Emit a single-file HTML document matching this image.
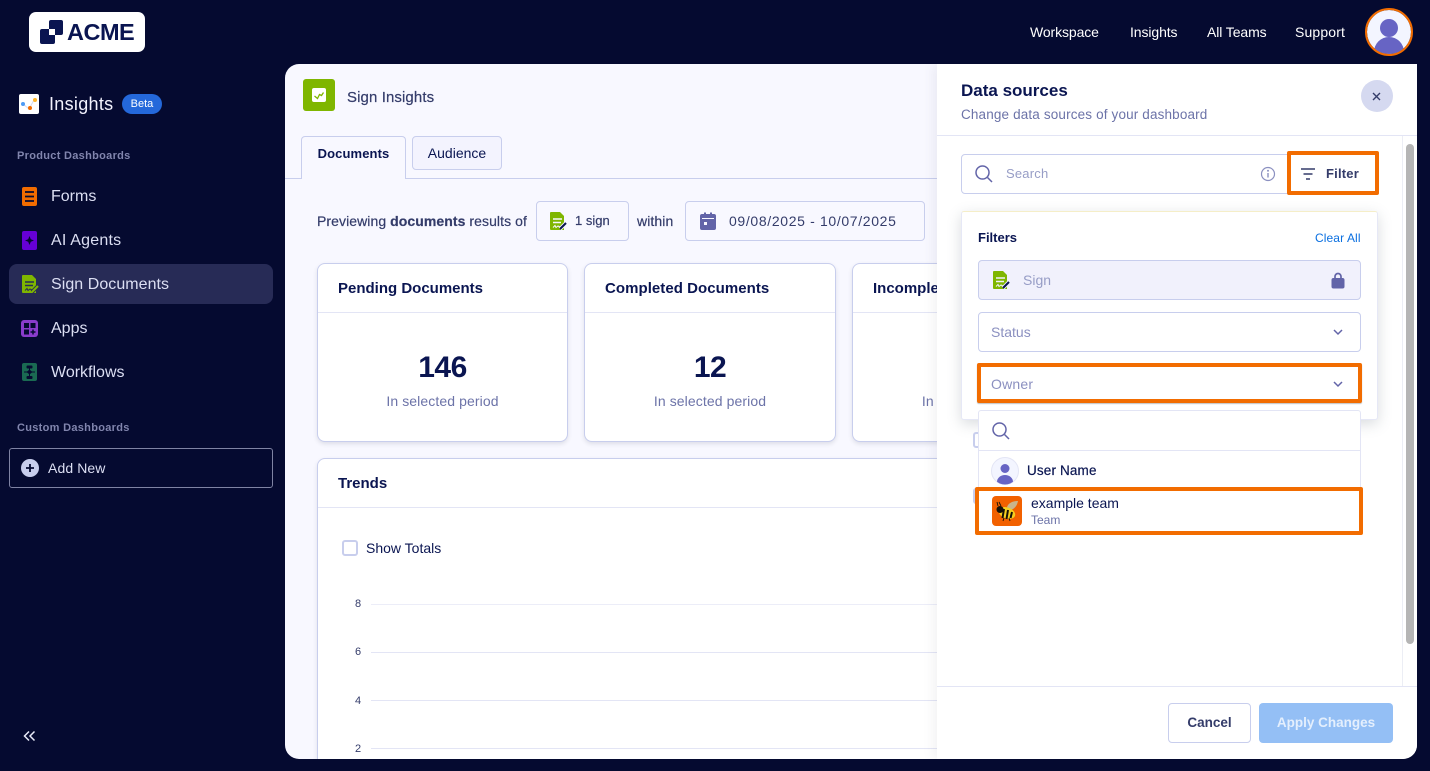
<!DOCTYPE html>
<html lang="en"><head><meta charset="utf-8"><title>Sign Insights</title>
<style>
*{box-sizing:border-box}
html,body{margin:0;padding:0;width:1430px;height:771px;overflow:hidden;background:#050a30;font-family:"Liberation Sans",sans-serif;color:#0a1551}
.a{position:absolute}
.t{position:absolute;white-space:nowrap;line-height:20px}
.box{position:absolute;border:1px solid #c8ceed;border-radius:4px}
.card{position:absolute;background:#fff;border:1px solid #c8ceed;border-radius:8px;box-shadow:0 2px 4px rgba(84,95,111,.16);overflow:hidden}
svg{position:absolute;display:block}
.sub{font-size:14px;letter-spacing:.1px;color:#6c73a8}
.med{-webkit-text-stroke:.2px currentColor}
</style></head><body>

<!-- top bar -->
<div class="a" style="left:29px;top:12px;width:116px;height:40px;background:#fff;border-radius:7px"></div>
<svg style="left:40px;top:20px" width="24" height="24" viewBox="0 0 24 24"><rect x="9" y="0" width="14" height="15" rx="2" fill="#0a1551"/><rect x="0" y="9" width="15" height="15" rx="2" fill="#0a1551"/><rect x="9" y="9" width="6" height="6" fill="#fff"/></svg>
<div class="t" style="left:67px;top:20px;font-size:23.500px;line-height:24px;font-weight:700;color:#0a1551;letter-spacing:-.5px">ACME</div>
<div class="t" style="left:1030px;top:22px;font-size:14px;color:#fff;letter-spacing:-.1px">Workspace</div>
<div class="t" style="left:1130px;top:22px;font-size:14px;color:#fff;letter-spacing:-.1px">Insights</div>
<div class="t" style="left:1207px;top:22px;font-size:14px;color:#fff;letter-spacing:-.1px">All Teams</div>
<div class="t" style="left:1295px;top:22px;font-size:14px;color:#fff;letter-spacing:.15px">Support</div>
<svg style="left:1365px;top:8px" width="48" height="48" viewBox="0 0 48 48"><defs><clipPath id="c1"><circle cx="24" cy="24" r="22"/></clipPath></defs><circle cx="24" cy="24" r="22" fill="#f3f5ff"/><g clip-path="url(#c1)"><circle cx="24" cy="20" r="9" fill="#6764c4"/><ellipse cx="24" cy="44" rx="15" ry="15" fill="#6764c4"/></g><circle cx="24" cy="24" r="23" fill="none" stroke="#f26c00" stroke-width="2"/></svg>

<!-- sidebar -->
<div class="a" style="left:19px;top:94px;width:20px;height:20px;background:#fff;border-radius:2px"></div>
<svg style="left:19px;top:94px" width="20" height="20" viewBox="0 0 20 20"><path d="M4 10l6 5 5-9" fill="none" stroke="#d5d9ee" stroke-width="1"/><circle cx="4" cy="10" r="2" fill="#4c9bf5"/><circle cx="11" cy="14" r="2" fill="#f26c00"/><circle cx="16" cy="6" r="2" fill="#ffb629"/></svg>
<div class="t" style="left:49px;top:94px;font-size:18px;color:#f3f3fe;letter-spacing:.3px">Insights</div>
<div class="a" style="left:122px;top:94px;width:40px;height:20px;border-radius:10px;background:#2468da;color:#fff;font-size:11px;line-height:20px;text-align:center">Beta</div>
<div class="t" style="left:17px;top:146px;font-size:11px;font-weight:700;color:#8185ad;letter-spacing:.3px">Product Dashboards</div>

<div class="a" style="left:22px;top:187px;width:15px;height:19px;background:#f26c00;border-radius:2px"></div>
<svg style="left:22px;top:187px" width="15" height="19" viewBox="0 0 15 19"><path d="M3 5h9M3 9.500h9M3 14h9" stroke="#050a30" stroke-width="1.800"/></svg>
<div class="t" style="left:51px;top:187px;font-size:16px;color:#dcdff3">Forms</div>

<div class="a" style="left:22px;top:231px;width:15px;height:19px;background:#6600d6;border-radius:2px"></div>
<svg style="left:22px;top:231px" width="15" height="19" viewBox="0 0 15 19"><path d="M7.500 5l1.300 3.200L12 9.500l-3.200 1.300L7.500 14l-1.300-3.200L3 9.500l3.200-1.300z" fill="#050a30"/></svg>
<div class="t" style="left:51px;top:231px;font-size:16px;color:#dcdff3;letter-spacing:.2px">AI Agents</div>

<div class="a" style="left:9px;top:264px;width:264px;height:40px;background:#272b56;border-radius:8px"></div>
<svg style="left:21px;top:274px" width="19" height="20" viewBox="0 0 19 20"><path d="M1 2a1 1 0 0 1 1-1h9l4 4v14H2a1 1 0 0 1-1-1z" fill="#7fb600"/><path d="M4 8h9M4 11.500h8" stroke="#272b56" stroke-width="1.500"/><path d="M4 16.500l2-2 1 2 2-1.500 2 1" fill="none" stroke="#272b56" stroke-width="1"/><path d="M11 18l6-6" stroke="#272b56" stroke-width="4"/><path d="M11 18l6-6" stroke="#7fb600" stroke-width="2"/></svg>
<div class="t" style="left:51px;top:275px;font-size:16px;color:#dcdff3;letter-spacing:.05px">Sign Documents</div>

<div class="a" style="left:21px;top:320px;width:17px;height:17px;background:#8a3ccb;border-radius:3px"></div>
<svg style="left:21px;top:320px" width="17" height="17" viewBox="0 0 17 17"><rect x="3" y="3" width="5" height="5" fill="#050a30"/><rect x="9.500" y="3" width="5" height="5" fill="#050a30"/><rect x="3" y="9.500" width="5" height="5" fill="#050a30"/><path d="M12 9.500v5M9.500 12h5" stroke="#050a30" stroke-width="1.500"/></svg>
<div class="t" style="left:51px;top:319px;font-size:16px;color:#dcdff3">Apps</div>

<div class="a" style="left:22px;top:363px;width:15px;height:18px;background:#1a6a52;border-radius:2px"></div>
<svg style="left:22px;top:363px" width="15" height="18" viewBox="0 0 15 18"><rect x="4.500" y="2.500" width="6" height="3" rx="1" fill="#050a30"/><path d="M7.500 6.500l3 2.500-3 2.500-3-2.500z" fill="#050a30"/><rect x="4.500" y="13" width="6" height="3" rx="1" fill="#050a30"/><path d="M2 9h11M7.500 5v9" stroke="#050a30" stroke-width="1"/></svg>
<div class="t" style="left:51px;top:363px;font-size:16px;color:#dcdff3">Workflows</div>

<div class="t" style="left:17px;top:418px;font-size:11px;font-weight:700;color:#8185ad;letter-spacing:.3px">Custom Dashboards</div>
<div class="a" style="left:9px;top:448px;width:264px;height:40px;border:1px solid #7f83a3;border-radius:3px"></div>
<svg style="left:21px;top:459px" width="18" height="18" viewBox="0 0 18 18"><circle cx="9" cy="9" r="9" fill="#c8ceed"/><path d="M9 5v8M5 9h8" stroke="#050a30" stroke-width="1.800"/></svg>
<div class="t" style="left:48px;top:458px;font-size:14px;color:#dcdff3;letter-spacing:.1px">Add New</div>
<svg style="left:23px;top:729px" width="14" height="14" viewBox="0 0 14 14"><path d="M6 2.500L1.500 7 6 11.500M11.500 2.500L7 7l4.500 4.500" fill="none" stroke="#e8eaf8" stroke-width="1.500"/></svg>

<!-- main panel -->
<div class="a" style="left:285px;top:64px;width:1132px;height:695px;background:#f8f8ff;border-radius:14px 0 14px 14px;overflow:hidden">
  <div class="a" style="left:18px;top:15px;width:32px;height:32px;background:#7fb600;border-radius:3px"></div>
  <svg style="left:27px;top:24px" width="14" height="14" viewBox="0 0 14 14"><rect width="14" height="14" rx="2" fill="#fff"/><path d="M2.500 8l3 2.500 2-4 2 1 2-3" fill="none" stroke="#7fb600" stroke-width="1.300"/></svg>
  <div class="t med" style="left:62px;top:24px;font-size:15px;letter-spacing:.1px;color:#343c6a">Sign Insights</div>

  <div class="a" style="left:0;top:114px;width:652px;height:1px;background:#c8ceed"></div>
  <div class="a" style="left:16px;top:72px;width:105px;height:43px;background:#f8f8ff;border:1px solid #c8ceed;border-bottom:0;border-radius:4px 4px 0 0;font-size:13px;letter-spacing:.1px;font-weight:700;line-height:33px;text-align:center;color:#0a1551">Documents</div>
  <div class="a" style="left:127px;top:72px;width:90px;height:34px;background:#f3f3fe;border:1px solid #c8ceed;border-radius:4px;font-size:14px;line-height:33px;text-align:center;color:#0a1551">Audience</div>

  <div class="t med" style="left:32px;top:147px;font-size:14px;letter-spacing:.07px;color:#343c6a">Previewing <b>documents</b> results of</div>
  <div class="box" style="left:251px;top:137px;width:93px;height:40px"></div>
  <svg style="left:264px;top:147px" width="19" height="20" viewBox="0 0 19 20"><path d="M1 2a1 1 0 0 1 1-1h9l4 4v14H2a1 1 0 0 1-1-1z" fill="#7fb600"/><path d="M4 8h9M4 11.500h8" stroke="#f8f8ff" stroke-width="1.500"/><path d="M4 16.500l2-2 1 2 2-1.500 2 1" fill="none" stroke="#f8f8ff" stroke-width="1"/><path d="M11 18l6-6" stroke="#f8f8ff" stroke-width="4"/><path d="M11 18l6-6" stroke="#0a1551" stroke-width="2"/></svg>
  <div class="t med" style="left:290px;top:147px;font-size:13px;color:#343c6a">1 sign</div>
  <div class="t med" style="left:352px;top:147px;font-size:14px;letter-spacing:.1px;color:#343c6a">within</div>
  <div class="box" style="left:400px;top:137px;width:240px;height:40px"></div>
  <svg style="left:414px;top:148px" width="18" height="18" viewBox="0 0 18 18"><path d="M3 2h2V0.500h2V2h4V0.500h2V2h2a2 2 0 0 1 2 2v12a2 2 0 0 1-2 2H3a2 2 0 0 1-2-2V4a2 2 0 0 1 2-2z" fill="#6264a8"/><rect x="3" y="6" width="12" height="1" fill="#f8f8ff"/><rect x="5" y="10" width="3" height="3" fill="#f8f8ff"/></svg>
  <div class="t" style="left:444px;top:147px;font-size:14px;color:#343c6a;letter-spacing:.65px">09/08/2025 - 10/07/2025</div>

  <div class="card" style="left:32px;top:199px;width:251px;height:179px"><div class="a" style="left:0;top:48px;width:100%;height:1px;background:#e3e5f5"></div></div>
  <div class="t" style="left:53px;top:215px;font-size:15px;font-weight:700;color:#0a1551">Pending Documents</div>
  <div class="t" style="left:32px;width:251px;text-align:center;top:287px;font-size:30px;line-height:34px;font-weight:700;color:#0a1551;letter-spacing:-.5px">146</div>
  <div class="t sub" style="left:32px;width:251px;text-align:center;top:327px">In selected period</div>

  <div class="card" style="left:299px;top:199px;width:252px;height:179px"><div class="a" style="left:0;top:48px;width:100%;height:1px;background:#e3e5f5"></div></div>
  <div class="t" style="left:320px;top:215px;font-size:15px;font-weight:700;color:#0a1551;letter-spacing:.05px">Completed Documents</div>
  <div class="t" style="left:299px;width:252px;text-align:center;top:287px;font-size:30px;line-height:34px;font-weight:700;color:#0a1551;letter-spacing:-.5px">12</div>
  <div class="t sub" style="left:299px;width:252px;text-align:center;top:327px">In selected period</div>

  <div class="card" style="left:567px;top:199px;width:252px;height:179px"><div class="a" style="left:0;top:48px;width:100%;height:1px;background:#e3e5f5"></div></div>
  <div class="t" style="left:588px;top:215px;font-size:15px;font-weight:700;color:#0a1551">Incomplete Documents</div>
  <div class="t sub" style="left:567px;width:252px;text-align:center;top:327px">In selected period</div>

  <div class="card" style="left:32px;top:394px;width:1000px;height:340px;border-radius:8px 8px 0 0"><div class="a" style="left:0;top:48px;width:100%;height:1px;background:#e3e5f5"></div></div>
  <div class="t" style="left:53px;top:410px;font-size:15px;font-weight:700;color:#0a1551">Trends</div>
  <div class="a" style="left:57px;top:476px;width:16px;height:16px;border:2px solid #c8ceed;border-radius:3px;background:#fff"></div>
  <div class="t" style="left:81px;top:474px;font-size:14px;color:#0a1551">Show Totals</div>

  <div class="t" style="left:70px;top:530px;font-size:11px;color:#343c6a">8</div>
  <div class="a" style="left:86px;top:540px;width:570px;height:1px;background:#ecedf8"></div>
  <div class="t" style="left:70px;top:578px;font-size:11px;color:#343c6a">6</div>
  <div class="a" style="left:86px;top:588px;width:570px;height:1px;background:#e3e5f5"></div>
  <div class="t" style="left:70px;top:627px;font-size:11px;color:#343c6a">4</div>
  <div class="a" style="left:86px;top:636px;width:570px;height:1px;background:#e3e5f5"></div>
  <div class="t" style="left:70px;top:675px;font-size:11px;color:#343c6a">2</div>
  <div class="a" style="left:86px;top:684px;width:570px;height:1px;background:#e3e5f5"></div>

  <!-- drawer -->
  <div class="a" style="left:652px;top:0;width:480px;height:695px;background:#fff;box-shadow:-4px 0 10px rgba(84,95,111,.08)"></div>
</div>

<!-- drawer content (page coords) -->
<div class="t" style="left:961px;top:81px;font-size:17px;font-weight:700;color:#0a1551">Data sources</div>
<div class="t" style="left:961px;top:105px;font-size:13.500px;letter-spacing:.15px;color:#6c73a8">Change data sources of your dashboard</div>
<div class="a" style="left:1361px;top:80px;width:32px;height:32px;border-radius:50%;background:#d5d9f0"></div>
<svg style="left:1372px;top:92px" width="9" height="9" viewBox="0 0 9 9"><path d="M1 1l7 7M8 1L1 8" stroke="#343c6a" stroke-width="1.400"/></svg>
<div class="a" style="left:937px;top:135px;width:480px;height:1px;background:#e3e5f5"></div>
<div class="a" style="left:1402px;top:136px;width:1px;height:550px;background:#eceef5"></div>
<div class="a" style="left:1406px;top:144px;width:8px;height:500px;background:#b5b5b5;border-radius:4px"></div>

<div class="box" style="left:961px;top:154px;width:330px;height:40px"></div>
<svg style="left:975px;top:165px" width="18" height="18" viewBox="0 0 18 18"><circle cx="7.500" cy="7.500" r="6.500" fill="none" stroke="#6264a8" stroke-width="1.500"/><path d="M12.500 12.500L17 17" stroke="#6264a8" stroke-width="1.500"/></svg>
<div class="t" style="left:1006px;top:164px;font-size:13px;letter-spacing:.2px;color:#979dc6">Search</div>
<svg style="left:1260px;top:166px" width="16" height="16" viewBox="0 0 16 16"><circle cx="8" cy="8" r="6.500" fill="none" stroke="#8b90c0" stroke-width="1.200"/><path d="M8 7v4.500" stroke="#8b90c0" stroke-width="1.400"/><circle cx="8" cy="4.800" r="1" fill="#8b90c0"/></svg>
<div class="a" style="left:1287px;top:151px;width:92px;height:44px;background:#fff;border:4px solid #f26c00;border-radius:2px"></div>
<svg style="left:1300px;top:167px" width="16" height="14" viewBox="0 0 16 14"><path d="M1 2h14M3.500 7h9M6 12h4" stroke="#343c6a" stroke-width="1.500"/></svg>
<div class="t" style="left:1326px;top:164px;font-size:13px;font-weight:700;letter-spacing:.2px;color:#343c6a">Filter</div>

<!-- filter pop -->
<div class="a" style="left:961px;top:211px;width:417px;height:209px;background:#fff;border:1px solid #e6e8f6;border-top-color:#f5eec8;border-radius:3px;box-shadow:0 4px 14px rgba(84,95,111,.22)"></div>
<div class="t" style="left:978px;top:228px;font-size:13px;font-weight:700;color:#0a1551">Filters</div>
<div class="t" style="left:1315px;top:228px;font-size:12px;letter-spacing:.1px;color:#0a6fe0">Clear All</div>
<div class="box" style="left:978px;top:260px;width:383px;height:40px;background:#f1f1fc"></div>
<svg style="left:992px;top:270px" width="19" height="20" viewBox="0 0 19 20"><path d="M1 2a1 1 0 0 1 1-1h9l4 4v14H2a1 1 0 0 1-1-1z" fill="#7fb600"/><path d="M4 8h9M4 11.500h8" stroke="#f1f1fc" stroke-width="1.500"/><path d="M4 16.500l2-2 1 2 2-1.500 2 1" fill="none" stroke="#f1f1fc" stroke-width="1"/><path d="M11 18l6-6" stroke="#f1f1fc" stroke-width="4"/><path d="M11 18l6-6" stroke="#0a1551" stroke-width="2"/></svg>
<div class="t" style="left:1023px;top:270px;font-size:14px;color:#979dc6">Sign</div>
<svg style="left:1331px;top:272px" width="14" height="17" viewBox="0 0 14 17"><path d="M4 7V4.500a3 3 0 0 1 6 0V7" fill="none" stroke="#6264a8" stroke-width="1.700"/><rect x="0.500" y="6" width="13" height="10.500" rx="2" fill="#6264a8"/></svg>
<div class="box" style="left:978px;top:312px;width:383px;height:40px;background:#fff"></div>
<div class="t" style="left:991px;top:322px;font-size:14px;color:#8b90c0">Status</div>
<svg style="left:1333px;top:329px" width="10" height="7" viewBox="0 0 10 7"><path d="M1 1l4 4 4-4" fill="none" stroke="#6264a8" stroke-width="1.500"/></svg>
<div class="a" style="left:977px;top:363px;width:385px;height:40px;background:#fff;border:4px solid #f26c00;border-radius:2px;box-shadow:0 1px 1px rgba(0,0,0,.25)"></div>
<div class="t" style="left:991px;top:374px;font-size:14px;letter-spacing:.2px;color:#8b90c0">Owner</div>
<svg style="left:1333px;top:381px" width="10" height="7" viewBox="0 0 10 7"><path d="M1 1l4 4 4-4" fill="none" stroke="#6264a8" stroke-width="1.500"/></svg>

<!-- behind-dropdown checkbox fragments -->
<div class="a" style="left:973px;top:432px;width:12px;height:16px;border:2px solid #c8ceed;border-radius:3px"></div>
<div class="a" style="left:973px;top:488px;width:8px;height:16px;background:#c8ceed;border-radius:3px"></div>

<!-- dropdown -->
<div class="a" style="left:978px;top:410px;width:383px;height:122px;background:#fff;border:1px solid #e3e5f5;border-radius:3px"></div>
<svg style="left:992px;top:422px" width="18" height="18" viewBox="0 0 18 18"><circle cx="7.500" cy="7.500" r="6.500" fill="none" stroke="#6264a8" stroke-width="1.500"/><path d="M12.500 12.500L17 17" stroke="#6264a8" stroke-width="1.500"/></svg>
<div class="a" style="left:979px;top:450px;width:381px;height:1px;background:#e3e5f5"></div>
<svg style="left:991px;top:457px" width="28" height="28" viewBox="0 0 28 28"><defs><clipPath id="c2"><circle cx="14" cy="14" r="13.500"/></clipPath></defs><circle cx="14" cy="14" r="13.500" fill="#f3f5ff" stroke="#e3e5f5"/><g clip-path="url(#c2)"><circle cx="14" cy="11.500" r="4.500" fill="#6764c4"/><ellipse cx="14" cy="25" rx="8" ry="7" fill="#6764c4"/></g></svg>
<div class="t med" style="left:1027px;top:461px;font-size:13.500px;letter-spacing:.15px;color:#0a1551">User Name</div>
<div class="a" style="left:975px;top:487px;width:388px;height:48px;background:#fff;border:4px solid #f26c00;border-radius:2px"></div>
<div class="a" style="left:992px;top:496px;width:30px;height:30px;background:#f26100;border-radius:4px"></div>
<svg style="left:992px;top:496px" width="30" height="30" viewBox="0 0 30 30"><path d="M15 11c2-5 7-6 11-6-1 5-4 9-9 9z" fill="#c9b48c"/><ellipse cx="15" cy="17" rx="8.500" ry="5.500" fill="#f5cf1e" transform="rotate(20 15 17)"/><path d="M12 13l-1.500 9M16 14l-1.500 9M20 16l-1.500 6" stroke="#151208" stroke-width="2"/><circle cx="8" cy="13.500" r="3.500" fill="#151208"/><path d="M6 10L5 6M9 10l-2-4M12 22l-1 3M17 22l1 3" stroke="#151208" stroke-width=".9"/></svg>
<div class="t" style="left:1031px;top:493px;font-size:14px;color:#0a1551">example team</div>
<div class="t" style="left:1031px;top:510px;font-size:12px;color:#6c73a8">Team</div>

<!-- footer -->
<div class="a" style="left:937px;top:686px;width:480px;height:1px;background:#e3e5f5"></div>
<div class="a" style="left:1168px;top:703px;width:83px;height:40px;background:#fff;border:1px solid #c8ceed;border-radius:4px;font-size:13.500px;font-weight:700;line-height:38px;text-align:center;color:#343c6a">Cancel</div>
<div class="a" style="left:1259px;top:703px;width:134px;height:40px;background:#94bff5;border-radius:4px;font-size:13.500px;font-weight:700;line-height:40px;text-align:center;color:#e4effd">Apply Changes</div>
</body></html>
